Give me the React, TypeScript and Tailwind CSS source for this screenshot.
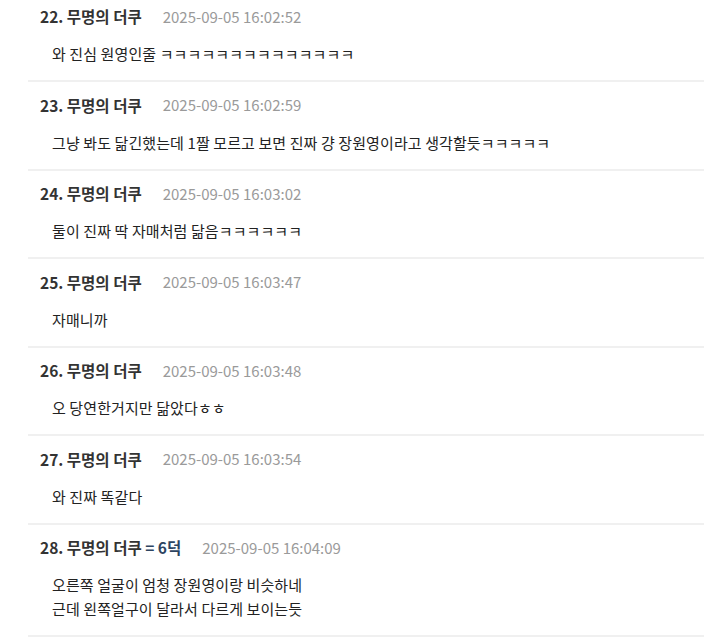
import React from "react";

type Item = { n: number; time: string; lines: string[]; extra?: string };

const items: Item[] = [
  { n: 22, time: "2025-09-05 16:02:52", lines: ["와 진심 원영인줄 ㅋㅋㅋㅋㅋㅋㅋㅋㅋㅋㅋㅋㅋㅋ"] },
  { n: 23, time: "2025-09-05 16:02:59", lines: ["그냥 봐도 닮긴했는데 1짤 모르고 보면 진짜 걍 장원영이라고 생각할듯ㅋㅋㅋㅋㅋ"] },
  { n: 24, time: "2025-09-05 16:03:02", lines: ["둘이 진짜 딱 자매처럼 닮음ㅋㅋㅋㅋㅋㅋ"] },
  { n: 25, time: "2025-09-05 16:03:47", lines: ["자매니까"] },
  { n: 26, time: "2025-09-05 16:03:48", lines: ["오 당연한거지만 닮았다ㅎㅎ"] },
  { n: 27, time: "2025-09-05 16:03:54", lines: ["와 진짜 똑같다"] },
  {
    n: 28,
    time: "2025-09-05 16:04:09",
    extra: "= 6덕",
    lines: ["오른쪽 얼굴이 엄청 장원영이랑 비슷하네", "근데 왼쪽얼구이 달라서 다르게 보이는듯"],
  },
];

export default function App() {
  return (
    <div
      className="w-[704px] h-[640px] overflow-hidden bg-white"
      style={{ fontFamily: '"Noto Sans CJK KR", "Noto Sans", sans-serif' }}
    >
      <div className="pl-[28px]">
        {items.map((it, i) => (
          <div
            key={it.n}
            className={
              "border-b-2 border-[#f0f0f0] pl-[12px] " +
              (i === 0 ? "pt-[6px] pb-[14px]" : "pt-[12.5px] pb-[14px]")
            }
          >
            <div className="flex items-center h-[22px]">
              <span className="text-[15.5px] font-bold text-[#333333]">
                {it.n}. 무명의 더쿠
                {it.extra && <span className="text-[#2d4461]"> {it.extra}</span>}
              </span>
              <span className="ml-[21px] text-[15px] text-[#9a9a9a]">{it.time}</span>
            </div>
            <div className="mt-[14px] pl-[12px] text-[15px] leading-[24px] text-[#222222] tracking-[0.1px]">
              {it.lines.map((l, j) => (
                <div key={j}>{l}</div>
              ))}
            </div>
          </div>
        ))}
      </div>
    </div>
  );
}
